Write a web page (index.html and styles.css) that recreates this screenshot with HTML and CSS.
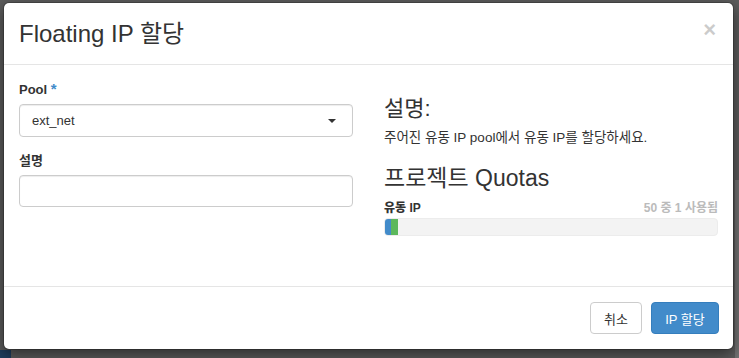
FILE: index.html
```html
<!DOCTYPE html>
<html lang="ko">

<head>
    <meta charset="UTF-8">
    <meta name="viewport" content="width=device-width, initial-scale=1.0">
    <title>Floating IP 할당</title>
    <link rel="stylesheet" href="styles.css">
</head>

<body>
    <div class="backdrop">
        <div class="modal-content">
            <div class="modal-header">
                <h3 class="modal-title">Floating IP 할당</h3>
                <span class="close">&times;</span>
            </div>
            <div class="modal-body">
                <div class="left">
                    <div class="form-group">
                        <label>Pool <span class="required">*</span></label>
                        <div class="select-box">
                            <span>ext_net</span>
                            <span class="caret"></span>
                        </div>
                    </div>
                    <div class="form-group">
                        <label>설명</label>
                        <div class="text-input"></div>
                    </div>
                </div>
                <div class="right">
                    <h3 class="side-title">설명:</h3>
                    <p class="help">주어진 유동 IP pool에서 유동 IP를 할당하세요.</p>
                    <h3 class="quota-title">프로젝트 Quotas</h3>
                    <div class="quota-row">
                        <strong>유동 IP</strong>
                        <span class="quota-count">50 중 1 사용됨</span>
                    </div>
                    <div class="progress">
                        <div class="bar bar-used"></div>
                        <div class="bar bar-new"></div>
                    </div>
                </div>
            </div>
            <div class="modal-footer">
                <button class="btn btn-default">취소</button>
                <button class="btn btn-primary">IP 할당</button>
            </div>
        </div>
    </div>
</body>

</html>
```

FILE: styles.css
```css
html,
body {
    margin: 0;
    height: 100%;
}

body {
    font-family: "Liberation Sans", Arial, "Noto Sans CJK KR", sans-serif;
    font-size: 13px;
    color: #333;
    background-color: #5d5d5d;
    overflow: hidden;
}

/* page behind the overlay */
.backdrop {
    height: 100%;
    padding-top: 2px;
    padding-left: 3px;
    box-sizing: border-box;
    background:
        linear-gradient(to right, transparent 735px, #747474 735px) 0 180px / 100% 178px no-repeat,
        linear-gradient(to right, #1f3d5e 11px, transparent 11px) 0 350px / 100% 8px no-repeat;
}

/* Modal Content */
.modal-content {
    width: 731px;
    background-color: #fff;
    border: 1px solid rgba(0, 0, 0, 0.2);
    border-radius: 6px;
    box-shadow: 0 5px 15px rgba(0, 0, 0, 0.5);
    box-sizing: border-box;
    background-clip: padding-box;
}

.modal-header {
    display: flex;
    justify-content: space-between;
    align-items: flex-start;
    padding: 15px 17px 15px 15px;
    border-bottom: 1px solid #e5e5e5;
}

.modal-title {
    margin: 0;
    font-size: 24px;
    font-weight: normal;
    line-height: 31px;
}

.close {
    font-size: 22px;
    font-weight: bold;
    line-height: 1;
    color: #000;
    opacity: 0.2;
    margin-top: 1px;
}

.modal-body {
    display: grid;
    grid-template-columns: 334px 334px;
    column-gap: 31px;
    padding: 15px 15px 0 15px;
    min-height: 221px;
    box-sizing: border-box;
}

.form-group {
    margin-bottom: 15px;
}

label {
    display: block;
    font-weight: bold;
    line-height: 18px;
    margin-bottom: 5px;
}

.required {
    color: #428bca;
    font-size: 15px;
}

.select-box,
.text-input {
    height: 33px;
    border: 1px solid #ccc;
    border-radius: 4px;
    box-sizing: border-box;
    box-shadow: inset 0 1px 1px rgba(0, 0, 0, 0.075);
}

.select-box {
    display: flex;
    justify-content: space-between;
    align-items: center;
    padding: 0 16px 0 12px;
    color: #333;
}

.text-input {
    height: 32px;
}

.caret {
    width: 0;
    height: 0;
    border-top: 4px solid #333;
    border-left: 4px solid transparent;
    border-right: 4px solid transparent;
}

.side-title,
.quota-title {
    font-size: 22px;
    font-weight: normal;
    line-height: 24px;
    margin: 17px 0 8px;
}

.quota-title {
    margin-top: 19px;
    margin-bottom: 10px;
    font-size: 23px;
}

.help {
    margin: 0;
    font-size: 13.5px;
    line-height: 18px;
}

.quota-row {
    display: flex;
    justify-content: space-between;
    font-size: 12px;
    font-weight: bold;
    line-height: 17px;
}

.quota-count {
    color: #bbb;
}

.progress {
    display: flex;
    height: 18px;
    margin-top: 1px;
    background-color: #f3f3f3;
    border: 1px solid #ececec;
    border-radius: 4px;
    overflow: hidden;
    box-sizing: border-box;
}

.bar {
    height: 100%;
}

.bar-used {
    width: 6px;
    background-color: #428bca;
}

.bar-new {
    width: 7px;
    background-color: #5cb85c;
}

.modal-footer {
    display: flex;
    justify-content: flex-end;
    gap: 9px;
    padding: 15px 14px 15px 15px;
    border-top: 1px solid #e5e5e5;
}

.btn {
    height: 32px;
    padding: 0 12px;
    font-family: inherit;
    font-size: 13px;
    border: 1px solid #ccc;
    border-radius: 4px;
    background-color: #fff;
    color: #333;
}

.btn-default {
    width: 52px;
}

.btn-primary {
    width: 68px;
    background-color: #428bca;
    border-color: #357ebd;
    color: #fff;
}
```
